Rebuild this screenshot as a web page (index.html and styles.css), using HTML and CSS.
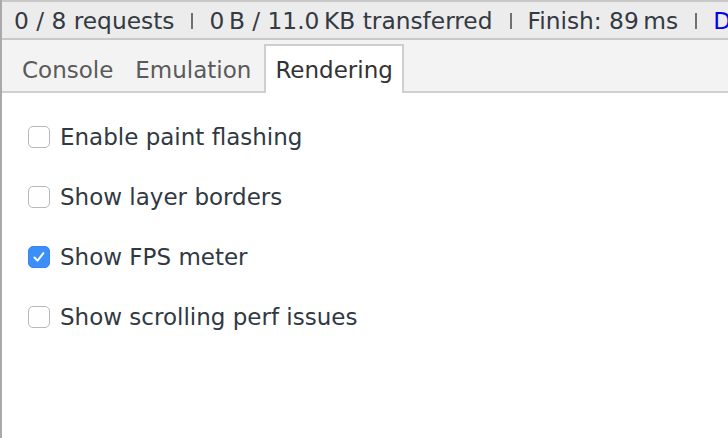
FILE: index.html
```html
<!DOCTYPE html>
<html>
<head>
<meta charset="utf-8">
<link rel="stylesheet" href="styles.css">
</head>
<body>
<div class="frame">
  <div class="status">
    <span>0 / 8 requests</span><span class="sep"></span><span>0&#8201;B / 11.0&#8201;KB transferred</span><span class="sep"></span><span>Finish: 89&#8201;ms</span><span class="sep"></span><span class="link">DOMContentLoaded</span>
  </div>
  <div class="tabs">
    <div class="tab">Console</div>
    <div class="tab">Emulation</div>
    <div class="tab active">Rendering</div>
  </div>
  <div class="content">
    <label class="row"><span class="box"></span><span>Enable paint flashing</span></label>
    <label class="row"><span class="box"></span><span>Show layer borders</span></label>
    <label class="row"><span class="box checked"><svg viewBox="0 0 22 22" width="22" height="22"><path d="M6 11.5 L9.4 15 L15.8 6.8" fill="none" stroke="#fff" stroke-width="2.2" stroke-linecap="round" stroke-linejoin="round"/></svg></span><span>Show FPS meter</span></label>
    <label class="row"><span class="box"></span><span>Show scrolling perf issues</span></label>
  </div>
</div>
</body>
</html>
```
FILE: styles.css
```css
html, body {
  margin: 0;
  padding: 0;
  height: 100%;
  overflow: hidden;
  background: #fff;
}
body {
  font-family: "DejaVu Sans", sans-serif;
  color: #303942;
}
.frame {
  height: 100%;
  border-left: 2px solid #a9a9a9;
  display: flex;
  flex-direction: column;
}
.status {
  height: 36px;
  border-top: 2px solid #c8c8c8;
  border-bottom: 2px solid #c8c8c8;
  background: #ececec;
  display: flex;
  align-items: center;
  padding-left: 12px;
  font-size: 23.3px;
  white-space: nowrap;
  overflow: hidden;
  color: #333a42;
}
.sep {
  flex: none;
  width: 2px;
  height: 16px;
  margin: 1px 16px 0 17px;
  background: #707070;
}
.link {
  color: #0000ee;
}
.tabs {
  height: 51px;
  background: #f3f3f3;
  border-bottom: 2px solid #d0d0d0;
  display: flex;
  align-items: flex-end;
  padding-left: 9px;
}
.tab {
  box-sizing: border-box;
  height: 49px;
  padding: 0 9px;
  display: flex;
  align-items: center;
  font-size: 23px;
  color: #5a5a5a;
  border: 2px solid transparent;
  border-bottom: none;
  margin-bottom: -2px;
}
.tab.active {
  margin-left: 2px;
  background: #fff;
  color: #333;
  border-color: #cfcfcf;
}
.content {
  flex: 1;
  padding: 32px 0 0 26px;
  display: flex;
  flex-direction: column;
  gap: 36px;
}
.row {
  display: flex;
  align-items: center;
  gap: 10px;
  font-size: 23px;
  height: 24px;
  color: #303942;
}
.box {
  flex: none;
  width: 22px;
  height: 22px;
  box-sizing: border-box;
  border: 1px solid #b8b8b8;
  border-radius: 5px;
  background: #fff;
  display: flex;
  align-items: center;
  justify-content: center;
}
.box.checked {
  background: #3c8ff8;
  border-color: #3a86ea;
}
.box svg {
  display: block;
}
```
